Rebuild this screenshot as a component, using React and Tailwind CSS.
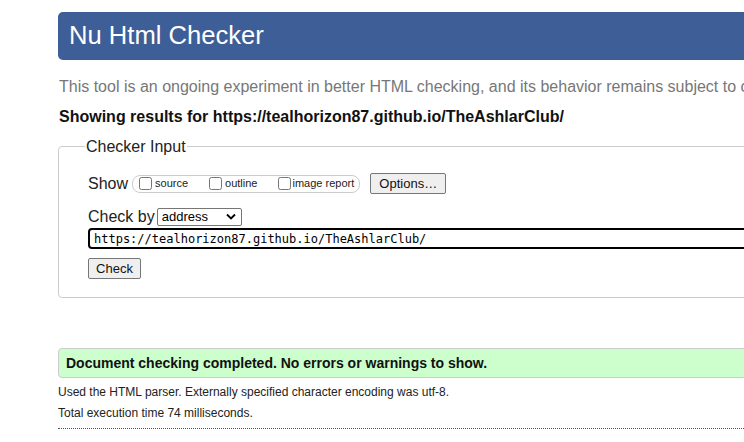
export default function App() {
  const font = { fontFamily: '"Liberation Sans", Arial, sans-serif' };
  return (
    <div className="w-[744px] h-[442px] overflow-hidden bg-white" style={font}>
      <div className="w-[1100px] pl-[58px] pt-[12px]">
        <div className="h-[48px] bg-[#3d5e97] rounded-l-[5px] flex items-center pl-[11px]">
          <span className="text-white text-[25.6px] leading-none">Nu Html Checker</span>
        </div>
        <p className="mt-[17px] text-[16px] leading-[19px] text-[#777] pl-[1px] whitespace-nowrap">
          This tool is an ongoing experiment in better HTML checking, and its behavior remains subject to change
        </p>
        <p className="mt-[11px] text-[16px] leading-[19px] font-bold text-[#111] pl-[1px] whitespace-nowrap">
          Showing results for https://tealhorizon87.github.io/TheAshlarClub/
        </p>
        <fieldset className="mt-[11px] border border-[#ccc] rounded-[4px] pl-[29px] pb-[18px] pt-[17px]">
          <legend className="text-[16px] leading-[19px] text-[#222] px-[1px] ml-[-3px]">Checker Input</legend>
          <div className="flex items-center h-[21px]">
            <span className="text-[16px] text-[#222]">Show</span>
            <div className="ml-[4px] h-[18px] border border-[#ccc] rounded-[8px] flex items-center pl-[6px] pr-[5px] whitespace-nowrap">
              <input type="checkbox" className="w-[13px] h-[13px] m-0 shrink-0" />
              <span className="text-[11px] ml-[3px] text-[#222]">source</span>
              <input type="checkbox" className="w-[13px] h-[13px] m-0 ml-[21px] shrink-0" />
              <span className="text-[11px] ml-[3px] text-[#222]">outline</span>
              <input type="checkbox" className="w-[13px] h-[13px] m-0 ml-[21px] shrink-0" />
              <span className="text-[11px] ml-[1px] text-[#222]">image report</span>
            </div>
            <button className="ml-[10px] h-[21px] w-[76px] border border-[#767676] rounded-[2px] bg-[#efefef] text-[13px] text-[#111] leading-none">
              Options…
            </button>
          </div>
          <div className="flex items-center mt-[13px] h-[19px]">
            <span className="text-[16px] text-[#222]">Check by</span>
            <div className="ml-[2px] h-[18px] w-[85px] border border-[#767676] rounded-[2px] flex items-center justify-between pl-[4px] pr-[5px]">
              <span className="text-[13px] text-black">address</span>
              <svg width="10" height="7" viewBox="0 0 10 7"><path d="M1 1.5 L5 5.5 L9 1.5" stroke="#000" strokeWidth="1.8" fill="none" /></svg>
            </div>
          </div>
          <div className="mt-[2px] h-[21px] border-2 border-black rounded-[4px] flex items-center pl-[4px]">
            <span className="text-black" style={{ fontFamily: '"DejaVu Sans Mono", "Liberation Mono", monospace', fontSize: '12px' }}>
              https://tealhorizon87.github.io/TheAshlarClub/
            </span>
          </div>
          <button className="mt-[9px] h-[21px] w-[53px] border border-[#767676] rounded-[2px] bg-[#efefef] text-[13px] text-[#111] leading-none block">
            Check
          </button>
        </fieldset>
        <div className="mt-[50px] h-[30px] bg-[#ccffcc] border border-[#ccc] rounded-l-[4px] flex items-center pl-[7px]">
          <span className="text-[14px] font-bold text-[#111]">Document checking completed. No errors or warnings to show.</span>
        </div>
        <p className="mt-[7px] text-[12px] leading-[14px] text-[#222]">Used the HTML parser. Externally specified character encoding was utf-8.</p>
        <p className="mt-[7px] text-[12px] leading-[14px] text-[#222]">Total execution time 74 milliseconds.</p>
        <div className="mt-[8px] border-t border-dotted border-[#555]"></div>
      </div>
    </div>
  );
}
